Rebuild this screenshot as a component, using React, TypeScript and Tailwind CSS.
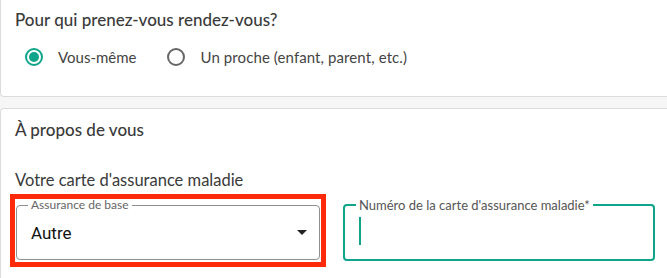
import React from "react";

export default function App() {
  const font = { fontFamily: "Lato, 'Noto Sans', sans-serif" };
  return (
    <div className="w-[667px] h-[278px] overflow-hidden bg-[#f6f6f6] text-[#333]" style={font}>
      <div className="bg-white border-l border-b border-[#dcdcdc] rounded-bl-[4px] h-[97px] mr-[-4px] pl-[14px] pt-[8px]">
        <div className="text-[17px] leading-[24px] font-medium text-[#3a3a3a]">Pour qui prenez-vous rendez-vous?</div>
        <div className="mt-[13px] h-[24px] flex items-center pl-[10px] text-[15px] text-[#444]">
          <span className="w-[18px] h-[18px] rounded-full border-2 border-[#10a58a] flex items-center justify-center">
            <span className="w-[10px] h-[10px] rounded-full bg-[#10a58a]" />
          </span>
          <span className="ml-[15px]">Vous-même</span>
          <span className="ml-[31px] w-[18px] h-[18px] rounded-full border-2 border-[#666]" />
          <span className="ml-[15px] tracking-[0.1px]">Un proche (enfant, parent, etc.)</span>
        </div>
      </div>
      <div className="mt-[11px] bg-white border-l border-t border-[#dcdcdc] rounded-tl-[4px] h-[200px] mr-[-4px] pl-[9px] pt-[9px]">
        <div className="pl-[5px] text-[17px] leading-[24px] font-medium text-[#3a3a3a]">À propos de vous</div>
        <div className="mt-[26px] pl-[5px] text-[16.5px] leading-[24px] text-[#3a3a3a]">Votre carte d'assurance maladie</div>
        <div className="mt-[2px] flex items-start gap-[17px]">
          <div className="w-[316px] h-[73px] border-[5px] border-[#ff2a0a] pl-[1px] pr-[1px]">
            <fieldset className="h-[61px] border border-[#8f8f8f] rounded-[4px] px-[11px] m-0">
              <legend className="px-[3px] text-[12px] leading-[12px] text-[#666]">Assurance de base</legend>
              <div className="flex items-center justify-between h-[45px] pl-[3px] pr-[1px]">
                <span className="text-[17px] text-[#111]" style={{ fontFamily: "Roboto, 'Liberation Sans', sans-serif" }}>Autre</span>
                <svg width="10" height="5" viewBox="0 0 10 5" className="mt-[-2px]"><path d="M0 0h10L5 5z" fill="#222" /></svg>
              </div>
            </fieldset>
          </div>
          <fieldset className="w-[312px] h-[63px] mt-[4px] border-2 border-[#10a58a] rounded-[4px] pl-[11px] m-0">
            <legend className="px-[3px] text-[13px] leading-[14px] text-[#555]">Numéro de la carte d'assurance maladie*</legend>
            <div className="pl-[3px] pt-[5px]">
              <div className="w-[1.5px] h-[28px] bg-[#10a58a]" />
            </div>
          </fieldset>
        </div>
      </div>
    </div>
  );
}
